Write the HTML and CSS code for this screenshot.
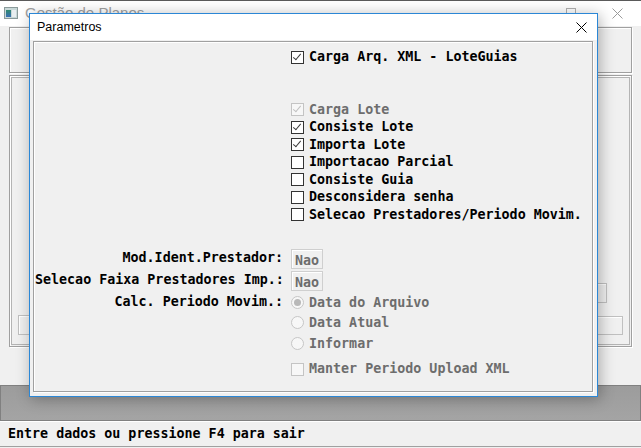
FILE: index.html
```html
<!DOCTYPE html>
<html>
<head>
<meta charset="utf-8">
<link rel="stylesheet" href="styles.css">
</head>
<body>
<div class="app">
  <div class="app-title">
    <span class="app-icon"><span class="ic-a"></span><span class="ic-b"></span></span>
    <span class="app-name">Gestão de Planos</span>
    <span class="app-spacer"></span>
    <span class="app-max"></span>
    <svg class="app-close" width="11" height="11" viewBox="0 0 11 11"><path d="M0.5 0.5 L10.5 10.5 M10.5 0.5 L0.5 10.5" stroke="#9a9a9a" stroke-width="1" fill="none"/></svg>
  </div>
  <div class="app-main">
    <div class="grp grp-top"></div>
    <div class="grp grp-body">
      <div class="grp-inner">
        <div class="btn-l"></div>
        <div class="btn-r1"></div>
        <div class="btn-r2"></div>
      </div>
    </div>
  </div>
  <div class="app-graybar"></div>
  <div class="app-status">Entre dados ou pressione F4 para sair</div>
</div>

<div class="dialog">
  <div class="dlg-title">
    <span class="dlg-name">Parametros</span>
    <svg class="dlg-close" width="11" height="11" viewBox="0 0 11 11"><path d="M0.5 0.5 L10.5 10.5 M10.5 0.5 L0.5 10.5" stroke="#000" stroke-width="1" fill="none"/></svg>
  </div>
  <div class="dlg-client">
    <div class="panel">
      <div class="row h18 mt6">
        <div class="lbl"></div>
        <div class="ctl"><span class="cb on"></span><span class="txt">Carga Arq. XML - LoteGuias</span></div>
      </div>
      <div class="row h175 mt35">
        <div class="lbl"></div>
        <div class="ctl"><span class="cb on dis"></span><span class="txt dim">Carga Lote</span></div>
      </div>
      <div class="row h175">
        <div class="lbl"></div>
        <div class="ctl"><span class="cb on"></span><span class="txt">Consiste Lote</span></div>
      </div>
      <div class="row h175">
        <div class="lbl"></div>
        <div class="ctl"><span class="cb on"></span><span class="txt">Importa Lote</span></div>
      </div>
      <div class="row h175">
        <div class="lbl"></div>
        <div class="ctl"><span class="cb"></span><span class="txt">Importacao Parcial</span></div>
      </div>
      <div class="row h175">
        <div class="lbl"></div>
        <div class="ctl"><span class="cb"></span><span class="txt">Consiste Guia</span></div>
      </div>
      <div class="row h175">
        <div class="lbl"></div>
        <div class="ctl"><span class="cb"></span><span class="txt">Desconsidera senha</span></div>
      </div>
      <div class="row h175">
        <div class="lbl"></div>
        <div class="ctl"><span class="cb"></span><span class="txt">Selecao Prestadores/Periodo Movim.</span></div>
      </div>
      <div class="row h22 mt245">
        <div class="lbl up2">Mod.Ident.Prestador:</div>
        <div class="ctl"><span class="field">Nao</span></div>
      </div>
      <div class="row h22">
        <div class="lbl up2">Selecao Faixa Prestadores Imp.:</div>
        <div class="ctl"><span class="field">Nao</span></div>
      </div>
      <div class="row h21">
        <div class="lbl up2">Calc. Periodo Movim.:</div>
        <div class="ctl"><span class="rb sel"></span><span class="txt dim">Data do Arquivo</span></div>
      </div>
      <div class="row h19">
        <div class="lbl"></div>
        <div class="ctl"><span class="rb"></span><span class="txt dim">Data Atual</span></div>
      </div>
      <div class="row h23">
        <div class="lbl"></div>
        <div class="ctl"><span class="rb"></span><span class="txt dim">Informar</span></div>
      </div>
      <div class="row h22 mt3">
        <div class="lbl"></div>
        <div class="ctl"><span class="cb dis"></span><span class="txt dim">Manter Periodo Upload XML</span></div>
      </div>
    </div>
  </div>
</div>
</body>
</html>
```

FILE: styles.css
```css
html, body {
  margin: 0;
  padding: 0;
}
body {
  width: 641px;
  height: 448px;
  overflow: hidden;
  background: #f0f0f0;
  position: relative;
  font-family: "DejaVu Sans Mono", "Liberation Mono", monospace;
}

/* background application window */
.app {
  width: 641px;
  height: 448px;
  display: flex;
  flex-direction: column;
  box-sizing: border-box;
  border-top: 1px solid #5a5a5a;
}
.app-title {
  height: 25px;
  background: #ffffff;
  display: flex;
  align-items: flex-start;
  flex: none;
}
.app-icon {
  width: 14px;
  height: 12px;
  margin: 6px 0 0 4px;
  background: #c8d8d8;
  border: 1px solid #8a9a9a;
  box-sizing: border-box;
  display: flex;
  gap: 1px;
  padding: 2px 1px 1px 1px;
}
.ic-a { width: 6px; background: linear-gradient(#2f8a6f, #3a6fb5); }
.ic-b { width: 4px; background: #e8eef0; }
.app-name {
  font-family: "Liberation Sans", "Noto Sans", sans-serif;
  font-size: 15px;
  color: #a0a0a0;
  margin: 3px 0 0 7px;
  line-height: 18px;
}
.app-spacer { flex: 1; }
.app-max {
  width: 8px;
  height: 8px;
  border: 1px solid #b0b0b0;
  margin: 7px 36px 0 0;
}
.app-close {
  margin: 7px 18px 0 0;
}
.app-main {
  flex: none;
  height: 359px;
  padding: 1px 9px 0 9px;
  box-sizing: border-box;
  display: flex;
  flex-direction: column;
  gap: 2px;
}
.grp {
  border: 1px solid #a0a0a0;
  box-shadow: inset 1px 1px 0 #ffffff, 1px 1px 0 #ffffff;
  box-sizing: border-box;
}
.grp-top {
  height: 46px;
}
.grp-body {
  height: 272px;
  padding: 1px;
}
.grp-inner {
  height: 100%;
  box-sizing: border-box;
  border: 1px solid #b4b4b4;
  position: relative;
}
.btn-l, .btn-r1, .btn-r2 {
  position: absolute;
  border: 1px solid #c0c0c0;
  box-shadow: inset 1px 1px 0 #fff;
}
.btn-l { left: 6px; top: 237px; width: 60px; height: 18px; }
.btn-r1 { right: 22px; top: 205px; width: 60px; height: 18px; }
.btn-r2 { right: 6px; top: 238px; width: 60px; height: 17px; }
.app-graybar {
  flex: none;
  margin-top: 0;
  height: 36px;
  background: linear-gradient(#9c9c9c, #a4a4a4);
  border: 1px solid #808080;
  box-sizing: border-box;
}
.app-status {
  flex: none;
  height: 26px;
  box-sizing: border-box;
  border-top: 1px solid #ffffff;
  border-bottom: 1px solid #a0a0a0;
  padding: 3px 0 0 8px;
  font-size: 13.33px;
  font-weight: bold;
  line-height: 18px;
  color: #000;
  background: #f0f0f0;
}

/* dialog window */
.dialog {
  position: absolute;
  left: 29px;
  top: 13px;
  width: 569px;
  height: 384px;
  box-sizing: border-box;
  border: 1px solid #2b87d6;
  background: #f0f0f0;
  box-shadow: 2px 2px 14px rgba(0,0,0,0.3);
  display: flex;
  flex-direction: column;
}
.dlg-title {
  height: 26px;
  flex: none;
  background: #ffffff;
  display: flex;
  align-items: center;
}
.dlg-name {
  font-family: "Liberation Sans", "Noto Sans", sans-serif;
  font-size: 12.5px;
  color: #000;
  margin-left: 7px;
  flex: 1;
}
.dlg-close {
  margin-right: 10px;
}
.dlg-client {
  flex: 1;
  padding: 1px 4px 4px 3px;
  display: flex;
}
.panel {
  flex: 1;
  border: 1px solid #a0a0a0;
  box-shadow: inset 1px 1px 0 #ffffff, 1px 1px 0 #ffffff;
  display: flex;
  flex-direction: column;
  padding-left: 1px;
}

.row {
  display: grid;
  grid-template-columns: 248px 1fr;
  column-gap: 8px;
  align-items: center;
  font-size: 13.33px;
  font-weight: bold;
  color: #000;
  flex: none;
}
.h18 { height: 18px; }
.h175 { height: 17.5px; }
.h22 { height: 22px; }
.h21 { height: 21px; }
.h19 { height: 19px; }
.h23 { height: 23px; }
.mt6 { margin-top: 6px; }
.mt35 { margin-top: 35px; }
.mt245 { margin-top: 24.5px; }
.mt3 { margin-top: 3px; }

.lbl {
  text-align: right;
  white-space: nowrap;
  line-height: 16px;
}
.up2 { position: relative; top: -1px; }
.ctl {
  display: flex;
  align-items: center;
  white-space: nowrap;
  line-height: 16px;
}
.txt { margin-left: 5px; }
.dim { color: #6d6d6d; }

.cb {
  width: 13px;
  height: 13px;
  box-sizing: border-box;
  border: 1px solid #333333;
  background: #ffffff;
  flex: none;
  position: relative;
}
.cb.on::after {
  content: "";
  position: absolute;
  left: 3px;
  top: 0px;
  width: 3px;
  height: 7px;
  border-right: 1px solid #3c3c3c;
  border-bottom: 1px solid #3c3c3c;
  transform: rotate(40deg);
}
.cb.dis {
  border-color: #c4c4c4;
  background: #f7f7f7;
}
.cb.dis.on::after {
  border-color: #c0c0c0;
}

.rb {
  width: 13px;
  height: 13px;
  box-sizing: border-box;
  border: 1px solid #c6c6c6;
  border-radius: 50%;
  background: #f7f7f7;
  flex: none;
  display: flex;
  align-items: center;
  justify-content: center;
}
.rb.sel::after {
  content: "";
  width: 7px;
  height: 7px;
  border-radius: 50%;
  background: #b8b8b8;
}

.field {
  width: 32px;
  height: 20px;
  box-sizing: border-box;
  border: 1px solid #cfcfcf;
  box-shadow: inset 1px 1px 0 #ffffff;
  color: #6d6d6d;
  padding: 3px 0 0 3px;
  line-height: 16px;
  background: #f0f0f0;
}
```
